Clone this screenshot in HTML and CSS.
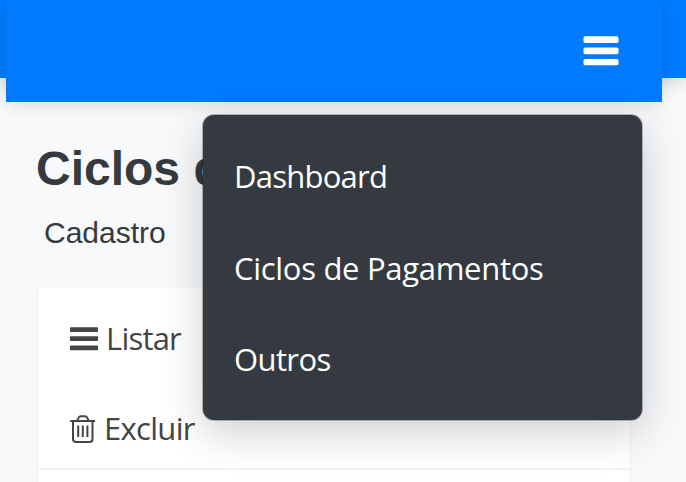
FILE: index.html
```html
<!DOCTYPE html>
<html lang="pt-BR">
<head>
<meta charset="utf-8">
<title>Ciclos de Pagamentos</title>
<link rel="stylesheet" href="styles.css">
</head>
<body>
<header class="header">
  <nav class="navbar">
    <button class="toggle" aria-label="Menu">
      <svg width="36" height="30" viewBox="0 0 36 30" fill="currentColor"><rect x="0.5" y="0.3" width="35" height="6.7" rx="1.6"/><rect x="0.5" y="11.5" width="35" height="6.7" rx="1.6"/><rect x="0.5" y="23" width="35" height="6.3" rx="1.6"/></svg>
    </button>
    <ul class="menu">
      <li><a class="dash">Dashboard</a></li>
      <li><a class="ciclos">Ciclos de Pagamentos</a></li>
      <li><a class="outros">Outros</a></li>
    </ul>
  </nav>
</header>
<main class="content">
  <h1 class="title">Ciclos d</h1>
  <p class="subtitle">Cadastro</p>
  <section class="card">
    <ul class="tabs">
      <li class="tab">
        <svg class="icon" width="28" height="24" viewBox="0 0 28 24" fill="currentColor"><rect y="0.3" width="28" height="4.8" rx="0.8"/><rect y="9.3" width="28" height="4.8" rx="0.8"/><rect y="18.5" width="28" height="4.8" rx="0.8"/></svg>
        <span class="listar">Listar</span>
      </li>
      <li class="tab">
        <svg class="icon" width="26" height="28" viewBox="0 0 26 28" fill="none" stroke="currentColor" stroke-width="2"><path d="M0.3 6H25M3 6v18q0 3 3 3h13.5q3 0 3-3V6M7.2 5.5L8.8 2.4Q9.4 1.2 10.8 1.2h4.2q1.4 0 2 1.2l1.6 3.1M8.2 10.5V22M12.8 10.5V22M17.4 10.5V22"/></svg>
        <span class="excluir">Excluir</span>
      </li>
    </ul>
  </section>
</main>
</body>
</html>
```
FILE: styles.css
```css
* { box-sizing: border-box; }
body {
  margin: 0;
  height: 482px;
  overflow: hidden;
  background: #f7f9fb;
  color: #343a40;
  font-family: "Open Sans", "Noto Sans", sans-serif;
}
ul { list-style: none; margin: 0; padding: 0; }
.header {
  height: 78px;
  padding: 0 24px 0 6px;
  background: #007bff;
  box-shadow: 0 3px 16px rgba(0, 0, 0, .17);
}
.navbar {
  position: relative;
  display: flex;
  justify-content: flex-end;
  align-items: center;
  height: 102px;
  padding-right: 43px;
  background: #007bff;
  box-shadow: 0 3px 16px rgba(0, 0, 0, .12);
}
.toggle {
  padding: 0;
  border: 0;
  background: none;
  color: #fff;
  line-height: 0;
}
.menu {
  position: absolute;
  z-index: 2;
  top: 115px;
  right: 20px;
  width: 439px;
  height: 305px;
  padding: 16px 31px;
  border-radius: 11px;
  background: #343a40;
  box-shadow: 0 0 0 1px rgba(0, 0, 0, .25), 0 12px 44px rgba(0, 0, 0, .2);
  color: #fff;
  font-size: 31px;
}
.menu li { height: 91.5px; line-height: 91.5px; white-space: nowrap; }
.dash { letter-spacing: -.75px; }
.ciclos { letter-spacing: -.3px; }
.outros { letter-spacing: -.6px; }
.content { height: 404px; padding: 63px 55px 0 37px; }
.title {
  margin: 0 0 0 -1px;
  font: bold 48px/56px "Liberation Sans", Arial, sans-serif;
  white-space: nowrap;
}
.subtitle {
  margin: 18px 0 0 7px;
  font: 30px/36px "Liberation Sans", Arial, sans-serif;
}
.card {
  height: 194px;
  margin-top: 37px;
  border: 1px solid #eef0f2;
  border-width: 0 1px;
  border-radius: 5px 5px 0 0;
  background: #fff;
}
.tabs { height: 182px; padding-top: 5px; border-bottom: 2px solid #f3f3f3; }
.tab {
  display: flex;
  align-items: center;
  height: 90px;
  padding-left: 32px;
  color: #444;
  font-size: 31px;
}
.icon { margin: 1px 8px 0 0; }
.listar { letter-spacing: -.8px; }
.excluir { letter-spacing: -.7px; }
```
